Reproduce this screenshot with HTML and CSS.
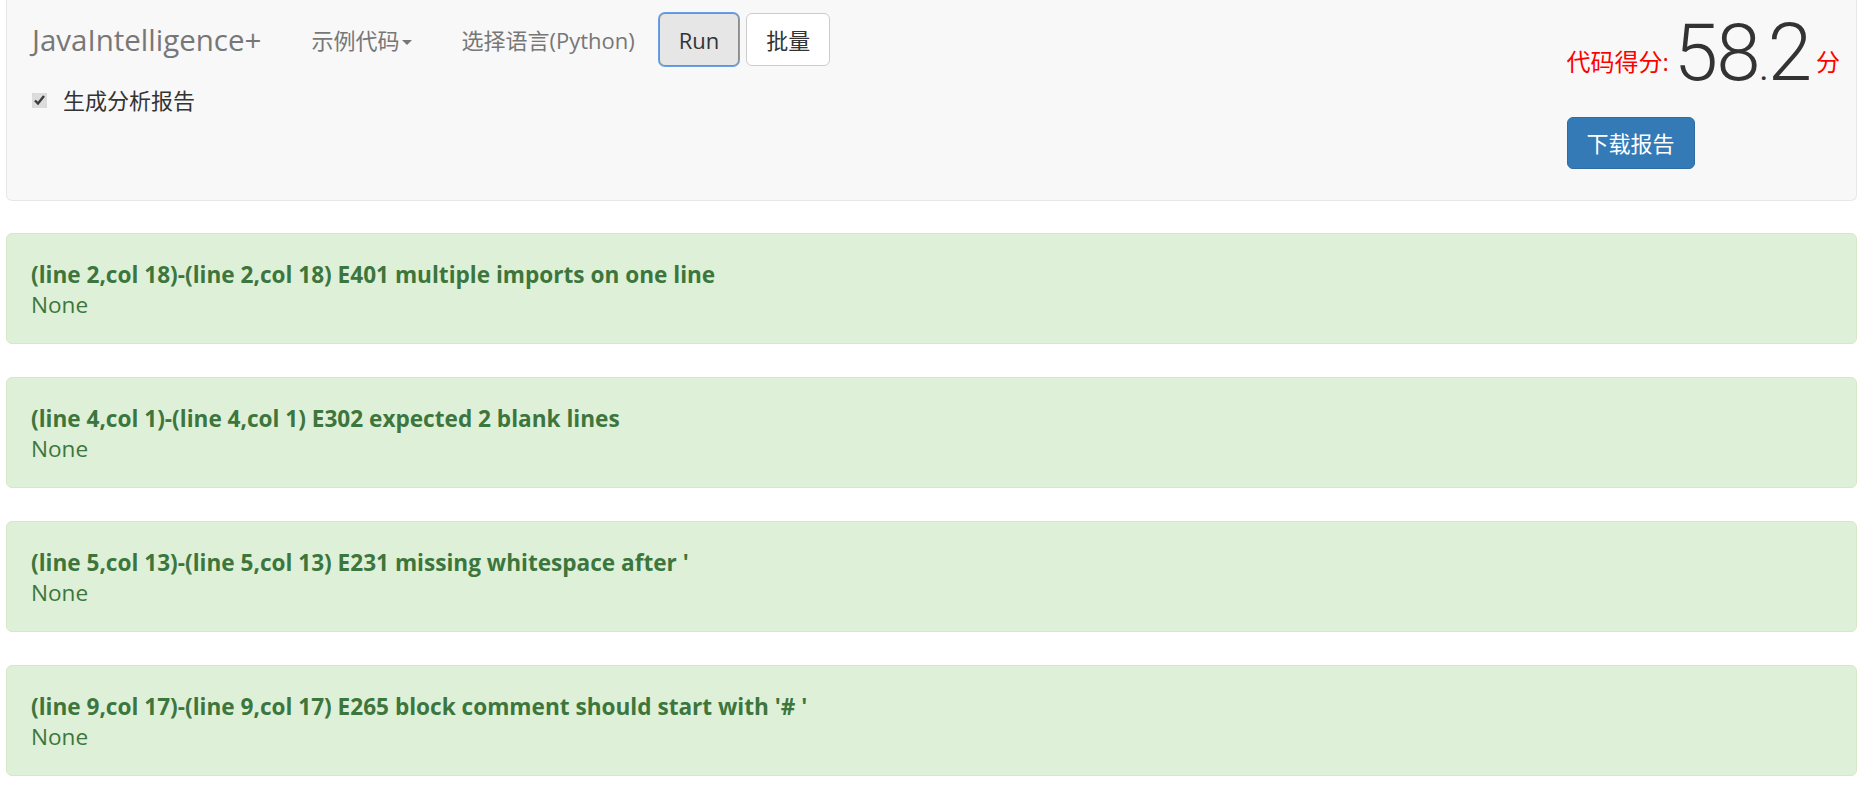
FILE: index.html
```html
<!DOCTYPE html>
<html lang="zh-CN">
<head>
<meta charset="utf-8">
<title>JavaIntelligence+</title>
<link rel="stylesheet" href="styles.css">
</head>
<body>
<nav class="navbar">
  <div class="nav-left">
    <div class="nav-row">
      <a class="brand">JavaIntelligence+</a>
      <a class="nav-link">示例代码<span class="caret"></span></a>
      <a class="nav-link lang">选择语言(Python)</a>
      <button class="btn btn-run">Run</button>
      <button class="btn">批量</button>
    </div>
    <label class="check-row"><input type="checkbox" checked><span>生成分析报告</span></label>
  </div>
  <div class="nav-right">
    <div class="score">
      <span class="score-label">代码得分:</span>
      <span class="score-value">58<span class="dot">.</span>2</span>
      <span class="score-unit">分</span>
    </div>
    <button class="btn btn-primary">下载报告</button>
  </div>
</nav>
<main class="results">
  <div class="alert"><strong>(line 2,col 18)-(line 2,col 18) E401 multiple imports on one line</strong><br>None</div>
  <div class="alert"><strong>(line 4,col 1)-(line 4,col 1) E302 expected 2 blank lines</strong><br>None</div>
  <div class="alert"><strong>(line 5,col 13)-(line 5,col 13) E231 missing whitespace after '</strong><br>None</div>
  <div class="alert"><strong>(line 9,col 17)-(line 9,col 17) E265 block comment should start with '# '</strong><br>None</div>
</main>
</body>
</html>
```

FILE: styles.css
```css
html, body {
  margin: 0;
}

body {
  font-family: "Open Sans", "Noto Sans CJK SC", sans-serif;
  font-size: 22px;
  line-height: 30px;
  color: #333;
  background: #fff;
  padding: 0 4px 0 6px;
  height: 797px;
  box-sizing: border-box;
  overflow: hidden;
}

.navbar {
  display: flex;
  height: 201px;
  box-sizing: border-box;
  background: #f8f8f8;
  border: 1px solid #e7e7e7;
  border-top: 0;
  border-radius: 0 0 6px 6px;
  margin-bottom: 32px;
}

.nav-left {
  padding: 13px 0 0 25px;
}

.nav-row {
  display: flex;
  align-items: center;
  height: 53px;
}

.brand {
  font-size: 29.5px;
  color: #777;
  margin-right: 50px;
}

.nav-link {
  color: #777;
  margin-right: 49px;
}

.nav-link.lang {
  margin-right: 24px;
}

.caret {
  display: inline-block;
  width: 0;
  height: 0;
  margin-left: 3px;
  vertical-align: middle;
  border-top: 5px solid #777;
  border-left: 5px solid transparent;
  border-right: 5px solid transparent;
}

.btn {
  font: inherit;
  font-size: 22px;
  line-height: 30px;
  height: 53px;
  padding: 10px 19px;
  border: 1px solid #ccc;
  border-radius: 6px;
  background: #fff;
  color: #333;
  margin-right: 7px;
}

.btn-run {
  background: #e6e6e6;
  border-color: #8c8c8c;
  box-shadow: 0 0 0 1px #6aa0e8;
}

.check-row {
  display: flex;
  align-items: center;
  gap: 16px;
  margin-top: 19px;
}

.check-row input {
  width: 15px;
  height: 15px;
  margin: 0;
  accent-color: #dcdcdc;
}

.nav-right {
  margin-left: auto;
  padding: 15px 16px 0 0;
  display: flex;
  flex-direction: column;
  align-items: flex-start;
}

.score {
  display: flex;
  align-items: flex-end;
  height: 80px;
}

.score-label,
.score-unit {
  color: #f00;
  font-size: 24px;
  line-height: 24px;
  padding-bottom: 21px;
}

.score-label {
  margin-right: 5px;
}

.score-unit {
  margin-left: 6px;
}

.score-value {
  font-family: Roboto, "Liberation Sans", sans-serif;
  font-weight: 300;
  font-size: 80px;
  line-height: 62px;
  letter-spacing: -2px;
  color: #333;
}

.score-value .dot {
  font-size: 46px;
}

.btn-primary {
  margin-top: 22px;
  height: 52px;
  margin-right: 0;
  background: #337ab7;
  border-color: #2e6da4;
  color: #fff;
}

.alert {
  background: #dff0d8;
  border: 1px solid #d6e9c6;
  border-radius: 6px;
  color: #3c763d;
  font-size: 22.6px;
  padding: 26px 24px 23px;
  margin-bottom: 33px;
}

.alert:last-child {
  margin-bottom: 0;
}
```
